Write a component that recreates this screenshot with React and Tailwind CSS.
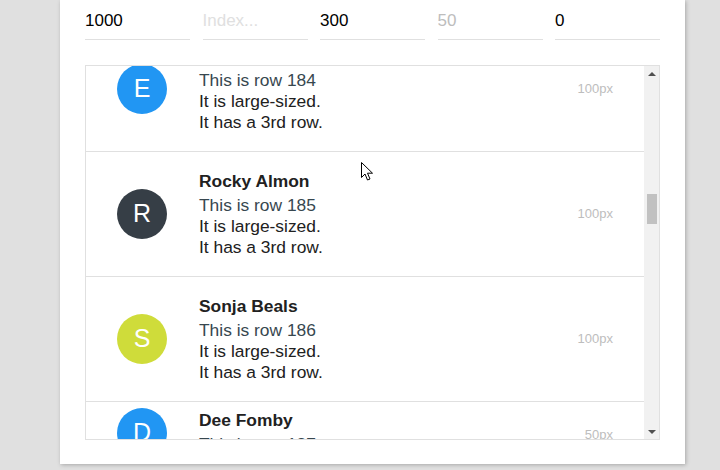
import React from "react";

const rows = [
  { letter: "E", color: "bg-[#2196f3]", name: "Emilee Arguello", index: 184, size: "100px" },
  { letter: "R", color: "bg-[#363e46]", name: "Rocky Almon", index: 185, size: "100px" },
  { letter: "S", color: "bg-[#cfdc3a]", name: "Sonja Beals", index: 186, size: "100px" },
];

function Row({ row }) {
  return (
    <div className="h-[125px] border-b border-[#e0e0e0] flex items-center pl-[31px] pr-[31px]">
      <div className={`w-[50px] h-[50px] rounded-full ${row.color} text-white text-[25px] flex items-center justify-center shrink-0`}>
        {row.letter}
      </div>
      <div className="flex-1 ml-[32px] text-[17.4px] leading-[21px] text-[#212121]">
        <div className="font-bold mb-[3px]">{row.name}</div>
        <div className="text-[#37474f]">This is row {row.index}</div>
        <div>It is large-sized.</div>
        <div>It has a 3rd row.</div>
      </div>
      <div className="text-[13px] text-[#bdbdbd]">{row.size}</div>
    </div>
  );
}

export default function App() {
  const inputs = [
    { value: "1000", text: "text-black" },
    { value: "", placeholder: "Index...", text: "text-black" },
    { value: "300", text: "text-black" },
    { value: "50", text: "text-[#bdbdbd]", disabled: true },
    { value: "0", text: "text-black" },
  ];

  return (
    <div className="w-[720px] h-[470px] bg-[#e0e0e0] overflow-hidden relative font-['Liberation_Sans',Arial,sans-serif]">
      <div className="ml-[60px] w-[625px] h-[464px] bg-white shadow-[1px_1px_4px_rgba(0,0,0,0.25)] px-[25px] pt-[10px]">
        <div className="flex justify-between">
          {inputs.map((inp, i) => (
            <input
              key={i}
              readOnly
              disabled={inp.disabled}
              value={inp.value}
              placeholder={inp.placeholder}
              className={`w-[105px] h-[30px] pb-[8px] border-b border-[#e0e0e0] text-[17px] bg-white outline-none placeholder:text-[#e0e0e0] ${inp.text}`}
            />
          ))}
        </div>

        <div className="mt-[25px] h-[375px] border border-[#e0e0e0] flex">
          <div className="flex-1 overflow-hidden">
            <div className="-mt-[39px]">
              {rows.map((r) => (
                <Row key={r.index} row={r} />
              ))}
              <div className="h-[50px] flex items-start pl-[31px] pr-[31px]">
                <div className="mt-[6px] w-[50px] h-[50px] rounded-full bg-[#2196f3] text-white text-[25px] flex items-center justify-center shrink-0">
                  D
                </div>
                <div className="flex-1 ml-[32px] mt-[8px] text-[17.4px] leading-[21px] text-[#212121]">
                  <div className="font-bold mb-[3px]">Dee Fomby</div>
                  <div className="text-[#37474f]">This is row 187</div>
                </div>
                <div className="mt-[23px] text-[13px] text-[#bdbdbd]">50px</div>
              </div>
            </div>
          </div>
          <div className="w-[15px] bg-[#f1f1f1] flex flex-col items-center">
            <div className="h-[15px] flex items-center justify-center">
              <div className="w-0 h-0 border-l-[4px] border-r-[4px] border-b-[4px] border-l-transparent border-r-transparent border-b-[#505050]" />
            </div>
            <div className="mt-[113px] w-[10px] h-[30px] bg-[#c1c1c1]" />
            <div className="flex-1" />
            <div className="h-[15px] flex items-center justify-center">
              <div className="w-0 h-0 border-l-[4px] border-r-[4px] border-t-[4px] border-l-transparent border-r-transparent border-t-[#505050]" />
            </div>
          </div>
        </div>
      </div>

      <svg className="absolute left-[361px] top-[162px]" width="13" height="20" viewBox="0 0 13 20">
        <path d="M0.5 0.5 L0.5 15.5 L4 12 L6.5 18 L9 17 L6.5 11.2 L11.5 11.2 Z" fill="white" stroke="black" strokeWidth="1" strokeLinejoin="round" />
      </svg>
    </div>
  );
}
